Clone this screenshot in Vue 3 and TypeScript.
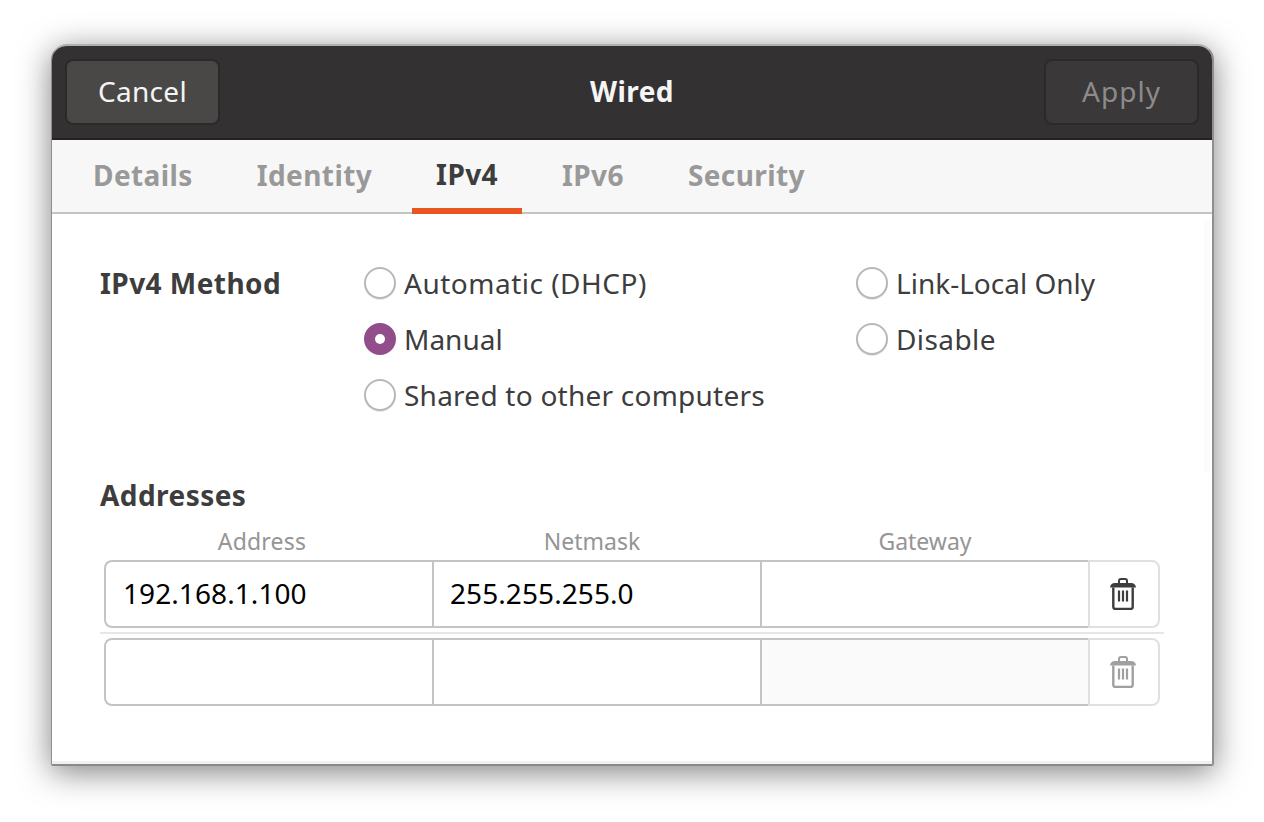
<script setup lang="ts">
const tabs = ['Details', 'Identity', 'IPv4', 'IPv6', 'Security']
const leftMethods = [
  { label: 'Automatic (DHCP)', on: false, track: '0.5px' },
  { label: 'Manual', on: true, track: '0' },
  { label: 'Shared to other computers', on: false, track: '0.24px' },
]
const rightMethods = [
  { label: 'Link-Local Only', on: false, track: '0' },
  { label: 'Disable', on: false, track: '0.4px' },
]
const rows = [
  { a: '192.168.1.100', n: '255.255.255.0', g: '', dim: false },
  { a: '', n: '', g: '', dim: true },
]
</script>

<template>
  <div class="page">
    <section class="window">
      <header class="titlebar">
        <button class="btn cancel">Cancel</button>
        <h1 class="title">Wired</h1>
        <button class="btn apply">Apply</button>
      </header>
      <nav class="tabs">
        <span v-for="t in tabs" :key="t" class="tab" :class="{ active: t === 'IPv4' }">{{ t }}</span>
      </nav>
      <main class="content">
        <div class="scroll-trough"></div>
        <div class="method">
          <div class="method-label">IPv4 Method</div>
          <div class="radio-col col-a">
            <label v-for="m in leftMethods" :key="m.label" class="radio" :style="{ letterSpacing: m.track }">
              <span class="dot" :class="{ on: m.on }"></span>{{ m.label }}
            </label>
          </div>
          <div class="radio-col">
            <label v-for="m in rightMethods" :key="m.label" class="radio" :style="{ letterSpacing: m.track }">
              <span class="dot" :class="{ on: m.on }"></span>{{ m.label }}
            </label>
          </div>
        </div>
        <h2 class="addr-title">Addresses</h2>
        <div class="heads">
          <span class="h-a">Address</span>
          <span class="h-n">Netmask</span>
          <span class="h-g">Gateway</span>
        </div>
        <template v-for="(r, i) in rows" :key="i">
          <div v-if="i > 0" class="sep"></div>
          <div class="row">
            <input class="cell first" :value="r.a" readonly />
            <input class="cell" :value="r.n" readonly />
            <input class="cell last" :class="{ shaded: r.dim }" :value="r.g" readonly />
            <button class="del" :class="{ dim: r.dim }" aria-label="Delete">
              <svg width="26" height="32" viewBox="0 0 26 32">
                <path d="M9 5V3c0-1.100.8-2 2-2h4c1.200 0 2 .9 2 2v2" fill="none" stroke="currentColor" stroke-width="2"/>
                <path d="M0 9.500C.4 6.500 2 5 5 5h16c3 0 4.600 1.500 5 4.500z" fill="currentColor"/>
                <path d="M3.300 9.500V29c0 1.300.7 1.900 1.900 1.900h15.600c1.200 0 1.900-.6 1.900-1.900V9.500" fill="none" stroke="currentColor" stroke-width="2.400"/>
                <path d="M9 12.500v11M13 12.500v11M17 12.500v11" fill="none" stroke="currentColor" stroke-width="2.200"/>
              </svg>
            </button>
          </div>
        </template>
      </main>
    </section>
  </div>
</template>

<style>
html, body { margin: 0; background: #fff; }
</style>

<style scoped>
.page {
  width: 1264px;
  height: 822px;
  box-sizing: border-box;
  padding: 44px 50px 56px 51px;
  overflow: hidden;
  font-family: "Noto Sans", "Open Sans", sans-serif;
  color: #3d3d3d;
}
.window {
  height: 722px;
  box-sizing: border-box;
  background: #fff;
  border-style: solid;
  border-width: 2px 2px 2px 1px;
  border-color: #b0b0b0 #8f8f8f #8a8a8a;
  border-radius: 16px 16px 2px 2px;
  box-shadow: 0 6px 32px rgba(0, 0, 0, 0.5), inset 0 -3px 0 #f1f1f1;
  display: flex;
  flex-direction: column;
  overflow: hidden;
}
.titlebar {
  height: 94px;
  flex: none;
  box-sizing: border-box;
  background: #333131;
  border-bottom: 2px solid #232121;
  display: flex;
  align-items: center;
  justify-content: space-between;
  padding: 0 13px;
  position: relative;
}
.btn {
  width: 155px;
  height: 66px;
  box-sizing: border-box;
  border-radius: 8px;
  border: 2px solid #2b2929;
  font: 400 28px "Noto Sans", sans-serif;
  padding: 0 0 2px;
}
.cancel { background: #4a4846; color: #f4f4f4; letter-spacing: 0.3px; }
.apply { background: #3a3838; color: #8b8b8b; letter-spacing: 1px; }
.title {
  position: absolute;
  left: 0;
  right: 0;
  margin: 0 0 2px;
  text-align: center;
  font: 700 28px "Noto Sans", sans-serif;
  letter-spacing: 0.4px;
  color: #f5f5f5;
  pointer-events: none;
}
.tabs {
  height: 74px;
  flex: none;
  box-sizing: border-box;
  background: #f7f7f7;
  border-bottom: 2px solid #c4c4c4;
  display: flex;
  padding-left: 17px;
  gap: 16px;
}
.tab {
  height: 74px;
  box-sizing: border-box;
  padding: 0 24px 4px;
  display: flex;
  align-items: center;
  font-size: 28px;
  font-weight: 700;
  letter-spacing: 0.4px;
  color: #999;
}
.active {
  color: #3d3d3d;
  border-bottom: 6px solid #e95420;
  padding-bottom: 0;
}
.content {
  position: relative;
  padding: 41px 48px 0;
}
.scroll-trough {
  position: absolute;
  top: 6px;
  right: 2px;
  width: 6px;
  height: 253px;
  border-radius: 3px;
  background: #fbfbfb;
}
.method {
  display: flex;
  height: 212px;
}
.method-label {
  width: 264px;
  height: 56px;
  line-height: 56px;
  font-size: 28px;
  font-weight: 700;
  letter-spacing: 0.45px;
}
.radio-col { display: flex; flex-direction: column; }
.col-a { width: 492px; }
.radio {
  height: 56px;
  display: flex;
  align-items: center;
  gap: 8px;
  font-size: 28px;
}
.dot {
  width: 32px;
  height: 32px;
  box-sizing: border-box;
  border-radius: 50%;
  border: 2px solid #b8b8b8;
  background: #fff;
  box-shadow: 0 1px 0 rgba(0, 0, 0, 0.1);
  display: grid;
  place-items: center;
}
.dot.on { background: #924d8b; border-color: #924d8b; box-shadow: none; }
.dot.on::after {
  content: "";
  width: 10px;
  height: 10px;
  border-radius: 50%;
  background: #fff;
}
.addr-title {
  margin: 0;
  height: 42px;
  line-height: 56px;
  font-size: 28px;
  font-weight: 700;
  letter-spacing: 0.45px;
  color: #3d3d3d;
}
.heads {
  display: flex;
  height: 37px;
  align-items: flex-start;
  line-height: 36px;
  margin-top: 14px;
  font-size: 23px;
  color: #959595;
  text-align: center;
}
.h-a { width: 324px; letter-spacing: 0.2px; }
.h-n { width: 336px; }
.h-g { width: 330px; }
.row {
  display: flex;
  height: 68px;
  margin: 0 4px;
  width: 1056px;
}
.sep {
  height: 2px;
  background: #e6e6e6;
  width: 1064px;
  margin: 4px 0;
}
.cell {
  width: 328px;
  height: 68px;
  box-sizing: border-box;
  border: 2px solid #c4c4c4;
  border-right: 0;
  background: #fff;
  outline: none;
  padding: 0 16px 2px;
  font: 400 28px "Noto Sans", sans-serif;
  letter-spacing: 0.08px;
  color: #000;
  min-width: 0;
}
.first { width: 328px; border-radius: 8px 0 0 8px; padding-left: 17px; }
.shaded { background: #fafafa; }
.del {
  width: 72px;
  height: 68px;
  box-sizing: border-box;
  border: 2px solid #e0e0e0;
  border-radius: 0 8px 8px 0;
  background: #fff;
  color: #3d3d3d;
  padding: 0 3px 0 0;
  display: grid;
  place-items: center;
}
.del.dim { color: #a0a0a0; }
</style>
